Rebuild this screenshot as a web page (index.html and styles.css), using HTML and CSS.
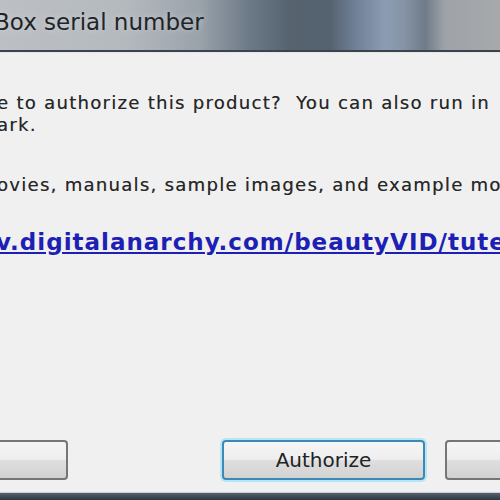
FILE: index.html
```html
<!DOCTYPE html>
<html>
<head>
<meta charset="utf-8">
<link rel="stylesheet" href="styles.css">
</head>
<body>
<div class="dialog">
  <div class="titlebar">
    <span class="title">Box serial number</span>
  </div>
  <div class="content">
    <p class="msg msg-first">e to authorize this product?&nbsp; You can also run in<br>ark.</p>
    <p class="msg msg-second">ovies, manuals, sample images, and example movies</p>
    <a class="link" href="#">v.digitalanarchy.com/beautyVID/tutes</a>
  </div>
  <div class="buttons">
    <button class="btn btn-left"></button>
    <button class="btn btn-default">Authorize</button>
    <button class="btn btn-right"></button>
  </div>
  <div class="taskbar"></div>
</div>
</body>
</html>
```
FILE: styles.css
```css
html, body {
  margin: 0;
  padding: 0;
  width: 500px;
  height: 500px;
  overflow: hidden;
  background: #f0f0f0;
}
.dialog {
  width: 500px;
  height: 500px;
  display: flex;
  flex-direction: column;
  overflow: hidden;
  font-family: "DejaVu Sans", "Liberation Sans", sans-serif;
}
.titlebar {
  height: 50px;
  flex: none;
  background: linear-gradient(90deg, #bcc0c4 0%, #b4b9be 25%, #9aa2aa 40%, #6c7987 50%, #56636f 58%, #55626f 66%, #6f8096 71%, #8c9db3 77%, #8493a5 81%, #6f7b88 85%, #9ea3a8 89%, #a7a9ab 100%);
  border-bottom: 2px solid #3b444d;
  display: flex;
  align-items: center;
  overflow: hidden;
}
.title {
  margin-left: -6px;
  margin-top: -6px;
  font-size: 23px;
  color: #1f2429;
  white-space: nowrap;
  text-shadow: 0 0 6px rgba(225,230,235,0.6);
}
.content {
  flex: 1;
  padding-top: 39px;
  border-top: 1px solid #e4e7ea;
  overflow: hidden;
  white-space: nowrap;
}
.msg {
  margin: 0 0 0 -3px;
  font-family: "DejaVu Sans", sans-serif;
  font-size: 18px;
  line-height: 22px;
  color: #262626;
  letter-spacing: 1.3px;
  text-shadow: 0.3px 0 0 rgba(38,38,38,0.5);
}
.msg-second {
  margin-top: 38px;
}
.link {
  display: block;
  margin-top: 33px;
  margin-left: -4px;
  font-family: "DejaVu Sans", sans-serif;
  font-size: 23px;
  font-weight: bold;
  color: #1d20b4;
  text-decoration: underline;
  letter-spacing: 1px;
}
.buttons {
  height: 52px;
  flex: none;
  display: flex;
  align-items: flex-start;
}
.btn {
  flex: none;
  box-sizing: border-box;
  height: 40px;
  border-radius: 4px;
  border: 2px solid #767676;
  background: linear-gradient(#f5f5f5 0%, #eeeeee 48%, #dedede 52%, #d2d2d2 100%);
  font-family: "DejaVu Sans", sans-serif;
  font-size: 20px;
  color: #222;
  padding: 0;
}
.btn-left {
  margin-left: -60px;
  width: 128px;
}
.btn-default {
  margin-left: 154px;
  width: 203px;
  border-color: #3e88b5;
  box-shadow: 0 0 0 2px #b5e6f6;
}
.btn-right {
  margin-left: 20px;
  width: 100px;
}
.taskbar {
  height: 7px;
  flex: none;
  background: linear-gradient(#55626f, #2f363d);
  border-top: 1px solid #c9cfd5;
}
```
